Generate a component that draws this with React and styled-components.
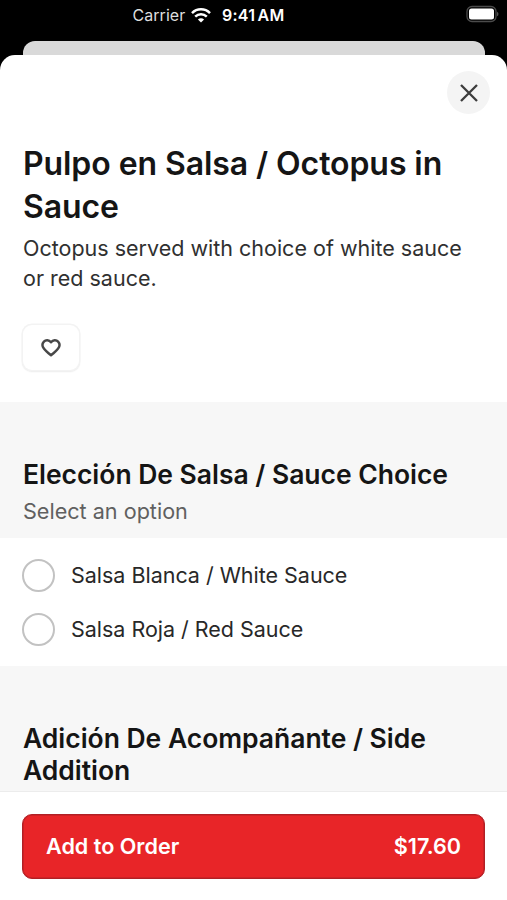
import React from "react";
import styled, { createGlobalStyle } from "styled-components";

const GlobalStyle = createGlobalStyle`
  * { box-sizing: border-box; }
  body { margin: 0; background: #000; }
  h1, h2, p { margin: 0; }
  button { font: inherit; cursor: pointer; }
`;

const Screen = styled.div`
  width: 507px;
  height: 900px;
  display: flex;
  flex-direction: column;
  overflow: hidden;
  background: #000;
  color: #151515;
  font-family: Inter, "Liberation Sans", sans-serif;
`;

const StatusBar = styled.header`
  height: 41px;
  flex: none;
  display: grid;
  grid-template-columns: 222px auto 1fr;
  align-items: start;
  padding: 5px 8px 0 0;
  color: #fff;
  font-size: 16px;
  line-height: 20px;
`;

const Carrier = styled.div`
  display: flex;
  align-items: center;
  gap: 6px;
  padding-left: 132.5px;
  color: #dedede;
  letter-spacing: 0.05px;
`;

const Clock = styled.div`
  font-weight: 600;
  letter-spacing: 0.25px;
  word-spacing: -2px;
  white-space: nowrap;
`;

const BatteryIcon = styled.svg`
  justify-self: end;
`;

const BackCard = styled.div`
  height: 14px;
  flex: none;
  margin: 0 22px 0 23px;
  border-radius: 12px 12px 0 0;
  background: #d9d9d9;
`;

const Sheet = styled.main`
  flex: 1;
  min-height: 0;
  display: flex;
  flex-direction: column;
  border-radius: 15px 15px 0 0;
  background: #fff;
  overflow: hidden;
`;

const Content = styled.div`
  flex: 1;
  min-height: 0;
  overflow: hidden;
`;

const SheetBar = styled.div`
  display: flex;
  justify-content: flex-end;
  padding: 16px 17px 0 0;
`;

const CloseButton = styled.button`
  width: 43px;
  height: 43px;
  display: grid;
  place-items: center;
  padding: 0;
  border: 0;
  border-radius: 50%;
  background: #f4f4f4;
  color: #3c3c3c;
`;

const ItemInfo = styled.section`
  height: 288px;
  padding: 28px 23px 0;
`;

const ItemTitle = styled.h1`
  font-size: 32px;
  font-weight: 600;
  line-height: 43px;
  letter-spacing: -0.08px;
`;

const Description = styled.p`
  margin-top: 5px;
  font-size: 21.5px;
  line-height: 30px;
  color: #303030;
`;

const FavoriteButton = styled.button`
  width: 56px;
  height: 45px;
  display: grid;
  place-items: center;
  margin: 32px 0 0;
  padding: 0;
  border: 0;
  border-radius: 9px;
  background: #fff;
  color: #484848;
  box-shadow: 0 0 0 1.5px #f3f3f3, 0 1px 1.5px 1px #e8e8e8;
`;

const GroupHeader = styled.section`
  height: ${(p) => p.$height};
  padding: 56.4px 23px 0;
  background: #f7f7f7;
`;

const GroupTitle = styled.h2`
  font-size: 26.5px;
  font-weight: 600;
  line-height: 32px;
  letter-spacing: -0.03px;
`;

const GroupHint = styled.p`
  margin-top: 5.6px;
  font-size: 21.6px;
  line-height: 30px;
  color: #606060;
`;

const OptionList = styled.div`
  height: 128px;
  padding: 10px 22px 0;
`;

const Option = styled.label`
  height: 54px;
  display: flex;
  align-items: center;
  gap: 16px;
  font-size: 21.5px;
  letter-spacing: -0.02px;
  color: #282828;
`;

const Radio = styled.input`
  appearance: none;
  width: 33px;
  height: 33px;
  flex: none;
  margin: 0;
  border: 2px solid #c2c2c2;
  border-radius: 50%;
  background: #fff;
`;

const Footer = styled.footer`
  height: 109px;
  flex: none;
  padding: 21.5px 22px 0;
  border-top: 1px solid #ececec;
  background: #fff;
`;

const OrderButton = styled.button`
  width: 463px;
  height: 65px;
  display: flex;
  align-items: center;
  justify-content: space-between;
  padding: 0 23px;
  border: 1px solid #b12025;
  border-radius: 10px;
  background: #e82528;
  box-shadow: inset 0 0 0 0.5px #b12025;
  color: #fff;
  && {
    font-size: 21.6px;
    font-weight: 600;
  }
`;

const Wifi = () => (
  <svg width="20" height="15" viewBox="0 0 20 15" fill="none" stroke="#fff" strokeWidth="2.5">
    <path d="M1 5.1C6 .1 14 .1 19 5.1" />
    <path d="M4.2 8.6C7.5 5.4 12.5 5.4 15.8 8.6" />
    <path d="M10 14.6L6.9 11.4C8.6 9.8 11.4 9.8 13.1 11.4Z" fill="#fff" stroke="none" />
  </svg>
);

const Battery = () => (
  <BatteryIcon width="33" height="18" viewBox="0 0 33 18">
    <rect x="1" y="1.5" width="29" height="15" rx="5" fill="none" stroke="#4b4b4b" strokeWidth="1.3" />
    <rect x="3" y="3.5" width="25" height="11" rx="2.5" fill="#fff" />
    <path d="M31.2 6.7C32.8 7.5 32.8 10.5 31.2 11.3Z" fill="#666" />
  </BatteryIcon>
);

const CloseIcon = () => (
  <svg width="20" height="20" viewBox="0 0 20 20" fill="none" stroke="currentColor" strokeWidth="2.3">
    <path d="M2 2L18 18M18 2L2 18" />
  </svg>
);

const HeartIcon = () => (
  <svg width="22" height="20" viewBox="0 0 22 20" fill="none" stroke="currentColor" strokeWidth="2.4" strokeLinejoin="round">
    <path d="M11 4.2C9 1.7 5.7 1.6 3.9 3.6C2.1 5.6 2.2 8.2 3.7 10.2C5.5 12.8 8.3 15.1 11 17.2C13.7 15.1 16.5 12.8 18.3 10.2C19.8 8.2 19.9 5.6 18.1 3.6C16.3 1.6 13 1.7 11 4.2Z" />
  </svg>
);

const options = ["Salsa Blanca / White Sauce", "Salsa Roja / Red Sauce"];

export default function App() {
  return (
    <Screen>
      <GlobalStyle />
      <StatusBar>
        <Carrier>
          Carrier <Wifi />
        </Carrier>
        <Clock>9:41 AM</Clock>
        <Battery />
      </StatusBar>
      <BackCard />
      <Sheet>
        <Content>
          <SheetBar>
            <CloseButton aria-label="Close">
              <CloseIcon />
            </CloseButton>
          </SheetBar>
          <ItemInfo>
            <ItemTitle>Pulpo en Salsa / Octopus in Sauce</ItemTitle>
            <Description>Octopus served with choice of white sauce or red sauce.</Description>
            <FavoriteButton aria-label="Favorite">
              <HeartIcon />
            </FavoriteButton>
          </ItemInfo>
          <GroupHeader $height="136px">
            <GroupTitle>Elección De Salsa / Sauce Choice</GroupTitle>
            <GroupHint>Select an option</GroupHint>
          </GroupHeader>
          <OptionList>
            {options.map((name) => (
              <Option key={name}>
                <Radio type="radio" name="salsa" />
                {name}
              </Option>
            ))}
          </OptionList>
          <GroupHeader $height="200px">
            <GroupTitle>Adición De Acompañante / Side Addition</GroupTitle>
          </GroupHeader>
        </Content>
        <Footer>
          <OrderButton>
            <span>Add to Order</span>
            <span>$17.60</span>
          </OrderButton>
        </Footer>
      </Sheet>
    </Screen>
  );
}
